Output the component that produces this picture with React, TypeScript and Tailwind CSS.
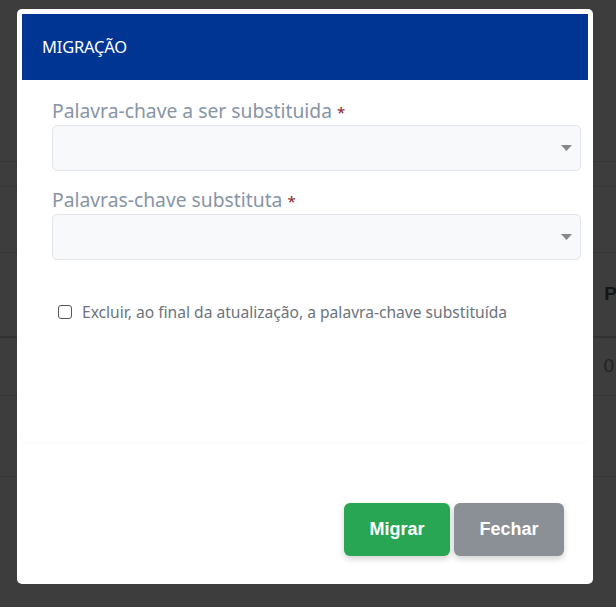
import React from "react";

function Caret() {
  return (
    <svg width="11" height="6" viewBox="0 0 11 6" className="shrink-0">
      <path d="M0 0 L11 0 L5.5 6 Z" fill="#888888" />
    </svg>
  );
}

function Field({ label, className }: { label: string; className?: string }) {
  return (
    <div className={className}>
      <div className="h-[24px] text-[19.3px] leading-[20px] text-[#8795a6] whitespace-nowrap">
        {label} <span className="text-[15px] leading-[15px] text-[#8b1c2c]">*</span>
      </div>
      <div className="h-[46px] w-full rounded-[5px] border border-[#e2e5e9] bg-[#f8f9fa] flex items-center justify-end pr-[8px]">
        <Caret />
      </div>
    </div>
  );
}

export default function App() {
  return (
    <div className="relative w-[616px] h-[607px] overflow-hidden bg-[#3d3d3d] font-['Noto_Sans',sans-serif]">
      {/* background page (dimmed) */}
      <div className="flex flex-col">
        <div className="h-[162px] border-b border-[#363636]" />
        <div className="h-[25px] border-b border-[#373737]" />
        <div className="h-[66px] border-b border-[#363636]" />
        <div className="h-[85px] border-b-2 border-[#303234] flex items-center justify-end">
          <span className="text-[19px] font-bold text-[#151515] mr-[-1px] font-['Liberation_Sans',sans-serif]">P</span>
        </div>
        <div className="h-[58px] border-b border-[#363636] flex items-center justify-end">
          <span className="text-[19px] text-[#222] mr-[2px] font-['Liberation_Sans',sans-serif]">0</span>
        </div>
        <div className="h-[81px] border-b border-[#363636]" />
        <div className="flex-1 bg-[#383838]" />
      </div>

      {/* modal */}
      <div className="absolute left-[17px] top-[9px] w-[576px] h-[575px] bg-white rounded-[5px] p-[5px] flex flex-col">
        <div className="h-[66px] bg-[#003594] flex items-center pl-[20px]">
          <span className="text-white text-[16.5px] tracking-[-0.2px]">MIGRAÇÃO</span>
        </div>
        <div className="h-[362px] pl-[30px] pr-[7px] pt-[21px] rounded-b-[4px] shadow-[0_1px_2px_rgba(0,0,0,0.035)]">
          <Field label="Palavra-chave a ser substituida" />
          <Field label="Palavras-chave substituta" className="mt-[19px]" />
          <label className="mt-[42px] ml-[6px] flex items-center gap-[10px]">
            <span className="w-[14px] h-[14px] rounded-[3px] border border-[#555] bg-white shrink-0" />
            <span className="text-[15.6px] leading-[20px] text-[#6c737b] whitespace-nowrap">
              Excluir, ao final da atualização, a palavra-chave substituída
            </span>
          </label>
        </div>
        <div className="flex-1 flex justify-end items-start pt-[61px] pr-[24px] gap-[4px]">
          <button className="w-[106px] h-[53px] rounded-[6px] bg-[#28a654] text-white font-bold text-[18px] font-['Liberation_Sans',sans-serif] shadow-[0_3px_6px_rgba(0,0,0,0.18)]">
            Migrar
          </button>
          <button className="w-[110px] h-[53px] rounded-[6px] bg-[#8a9096] text-white font-bold text-[18px] font-['Liberation_Sans',sans-serif] shadow-[0_3px_6px_rgba(0,0,0,0.18)]">
            Fechar
          </button>
        </div>
      </div>
    </div>
  );
}
